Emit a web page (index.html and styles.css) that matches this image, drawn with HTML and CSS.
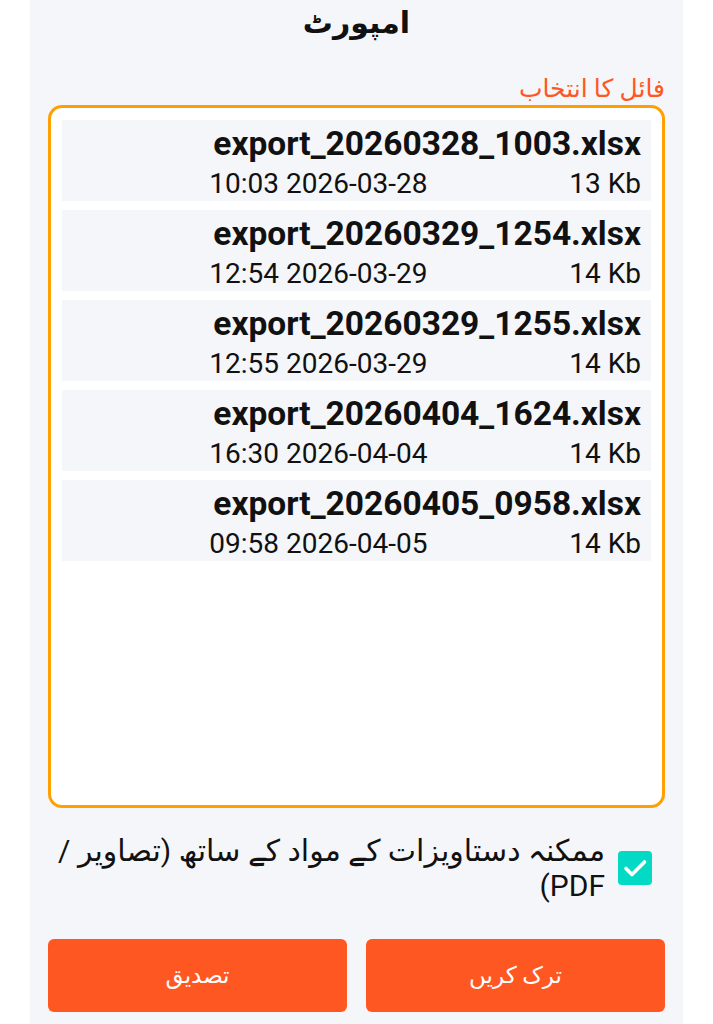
FILE: index.html
```html
<!DOCTYPE html>
<html lang="ur" dir="rtl">
<head>
  <meta charset="UTF-8">
  <meta name="viewport" content="width=device-width, initial-scale=1.0">
  <title>امپورٹ</title>
  <link rel="stylesheet" href="styles.css">
</head>
<body>
  <div class="screen">
    <h1 class="title">امپورٹ</h1>

    <div class="field-label">فائل کا انتخاب</div>

    <div class="file-box">
      <ul class="file-list">
        <li class="file-item">
          <div class="file-info">
            <div class="file-name" dir="ltr">export_20260328_1003.xlsx</div>
            <div class="file-meta">
              <span dir="ltr">13 Kb</span>
              <span dir="ltr">10:03 2026-03-28</span>
            </div>
          </div>
        </li>
        <li class="file-item">
          <div class="file-info">
            <div class="file-name" dir="ltr">export_20260329_1254.xlsx</div>
            <div class="file-meta">
              <span dir="ltr">14 Kb</span>
              <span dir="ltr">12:54 2026-03-29</span>
            </div>
          </div>
        </li>
        <li class="file-item">
          <div class="file-info">
            <div class="file-name" dir="ltr">export_20260329_1255.xlsx</div>
            <div class="file-meta">
              <span dir="ltr">14 Kb</span>
              <span dir="ltr">12:55 2026-03-29</span>
            </div>
          </div>
        </li>
        <li class="file-item">
          <div class="file-info">
            <div class="file-name" dir="ltr">export_20260404_1624.xlsx</div>
            <div class="file-meta">
              <span dir="ltr">14 Kb</span>
              <span dir="ltr">16:30 2026-04-04</span>
            </div>
          </div>
        </li>
        <li class="file-item">
          <div class="file-info">
            <div class="file-name" dir="ltr">export_20260405_0958.xlsx</div>
            <div class="file-meta">
              <span dir="ltr">14 Kb</span>
              <span dir="ltr">09:58 2026-04-05</span>
            </div>
          </div>
        </li>
      </ul>
    </div>

    <label class="check-row">
      <span class="check-box">
        <svg width="30" height="30" viewBox="0 0 30 30">
          <path d="M6 15.5l6 6L24.5 9" fill="none" stroke="#fff" stroke-width="3.6" stroke-linecap="round" stroke-linejoin="round"/>
        </svg>
      </span>
      <span class="check-text">ممکنہ دستاویزات کے مواد کے ساتھ (تصاویر / PDF)</span>
    </label>

    <div class="actions">
      <button class="button">ترک کریں</button>
      <button class="button">تصدیق</button>
    </div>
  </div>
</body>
</html>
```

FILE: styles.css
```css
body {
  margin: 0;
  background-color: #fff;
  font-family: Roboto, "DejaVu Sans", sans-serif;
  color: #111;
}
.screen {
  margin: 0 30px;
  padding: 0 18px;
  min-height: 1024px;
  background-color: #f5f6fa;
}
.title {
  margin: 0;
  padding-top: 3px;
  text-align: center;
  font-size: 30px;
  font-weight: bold;
  line-height: 40px;
}
.field-label {
  margin-top: 29px;
  color: #ff5722;
  font-size: 25px;
  line-height: 33px;
}
.file-box {
  height: 673px;
  border: 3px solid #ffa000;
  border-radius: 14px;
  background-color: #fff;
  padding: 12px 11px;
}
.file-list {
  list-style: none;
  margin: 0;
  padding: 0;
  display: flex;
  flex-direction: column;
  gap: 9px;
}
.file-item {
  display: flex;
  padding: 5px 10px 0;
  background-color: #f5f6fa;
}
.file-info {
  display: flex;
  flex-direction: column;
}
.file-name {
  font-size: 33.5px;
  font-weight: bold;
  line-height: 38px;
}
.file-meta {
  display: flex;
  justify-content: space-between;
  gap: 20px;
  margin-top: 4px;
  margin-left: -4px;
  font-size: 28px;
  line-height: 34px;
}
.check-row {
  display: flex;
  align-items: center;
  gap: 13px;
  margin-top: 25px;
  padding-right: 13px;
}
.check-box {
  flex: none;
  display: flex;
  align-items: center;
  justify-content: center;
  width: 34px;
  height: 34px;
  border-radius: 4px;
  background-color: #03dac5;
}
.check-text {
  font-size: 30px;
  line-height: 35px;
}
.actions {
  display: flex;
  gap: 19px;
  margin-top: 36px;
}
.button {
  flex: 1;
  height: 73px;
  border: none;
  border-radius: 6px;
  background-color: #ff5722;
  color: #fff;
  font-family: Roboto, "DejaVu Sans", sans-serif;
  font-size: 23px;
  cursor: pointer;
}
```
